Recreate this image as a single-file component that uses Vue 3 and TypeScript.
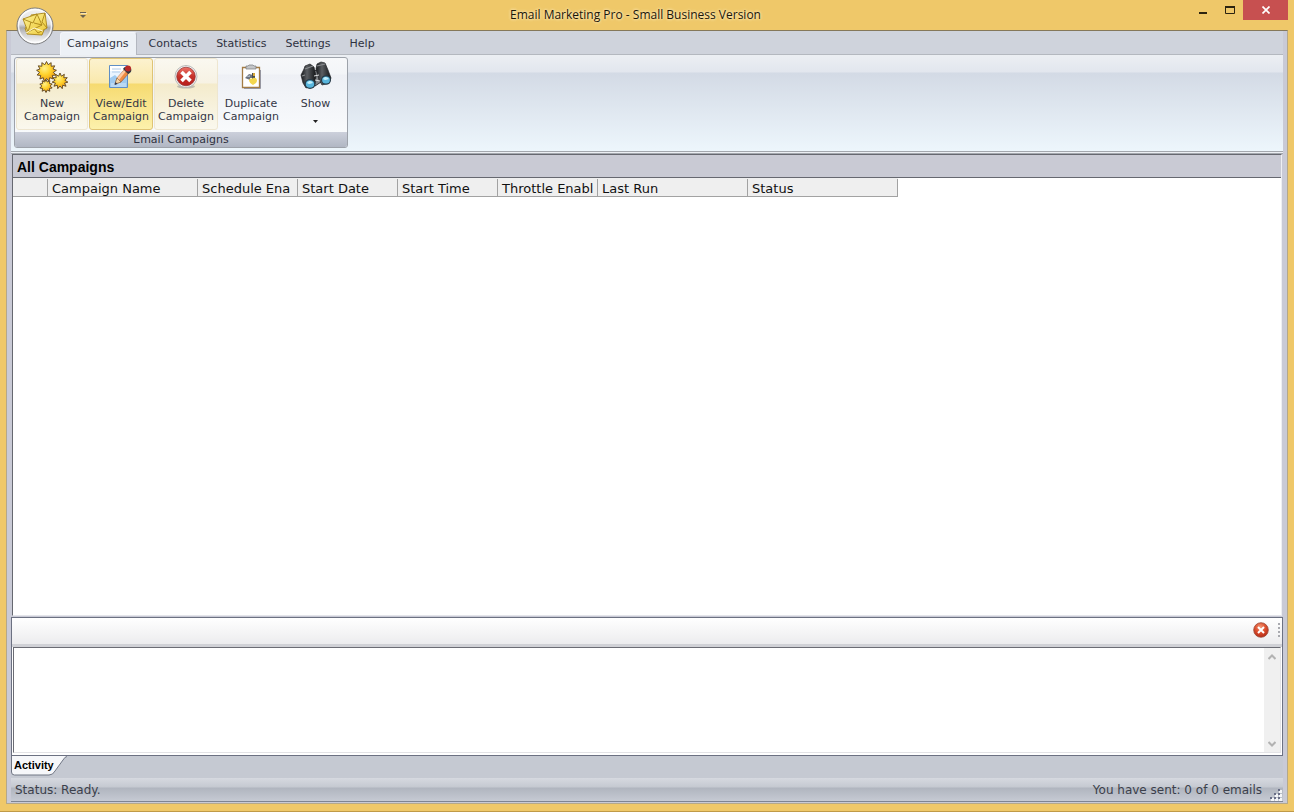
<script setup lang="ts">
import { ref } from 'vue'

interface RibbonCommand {
  icon: string
  lines: string[]
  tone: string
}

const menuTabs: string[] = ['Campaigns', 'Contacts', 'Statistics', 'Settings', 'Help']
const activeTab = ref('Campaigns')

const commands: RibbonCommand[] = [
  { icon: 'new', lines: ['New', 'Campaign'], tone: 'warm wide' },
  { icon: 'edit', lines: ['View/Edit', 'Campaign'], tone: 'hot' },
  { icon: 'delete', lines: ['Delete', 'Campaign'], tone: 'warm' },
  { icon: 'duplicate', lines: ['Duplicate', 'Campaign'], tone: '' },
  { icon: 'show', lines: ['Show'], tone: '' },
]

const columns: { label: string; size: string }[] = [
  { label: '', size: 'tiny' },
  { label: 'Campaign Name', size: 'large' },
  { label: 'Schedule Ena', size: 'medium' },
  { label: 'Start Date', size: 'medium' },
  { label: 'Start Time', size: 'medium' },
  { label: 'Throttle Enabl', size: 'medium' },
  { label: 'Last Run', size: 'large' },
  { label: 'Status', size: 'large' },
]

const log = ref('')

function burst(cx: number, cy: number, outer: number, inner: number, spikes: number): string {
  const points: string[] = []
  for (let i = 0; i < spikes * 2; i++) {
    const r = i % 2 === 0 ? outer : inner
    const a = (Math.PI * i) / spikes - Math.PI / 2
    points.push(`${(cx + r * Math.cos(a)).toFixed(2)},${(cy + r * Math.sin(a)).toFixed(2)}`)
  }
  return points.join(' ')
}

const bursts: string[] = [
  burst(10.5, 10.5, 10, 7, 13),
  burst(24, 20, 8, 5, 11),
  burst(10, 25, 6.5, 4.2, 10),
]
</script>

<template>
  <div class="window">
    <header class="titlebar">
      <div class="quick">
        <button class="quick-more" aria-label="Customize Quick Access Toolbar">
          <svg width="7" height="7" viewBox="0 0 7 7"><path d="M0 1.500h6" stroke="#6b6250" /><path d="M0 4h6L3 7z" fill="#6b6250" /><path d="M1 2.500h6" stroke="#f8e4b4" /></svg>
        </button>
      </div>
      <h1 class="title">Email Marketing Pro - Small Business Version</h1>
      <div class="caption-buttons">
        <button aria-label="Minimize">
          <svg width="10" height="10" viewBox="0 0 10 10"><path d="M1 7h8v2H1z" fill="#2c2410" /></svg>
        </button>
        <button aria-label="Maximize">
          <svg width="10" height="8" viewBox="0 0 10 8"><path d="M.5.5h9v7h-9z" fill="none" stroke="#2c2410" /><path d="M0 1h10" stroke="#2c2410" stroke-width="2" /></svg>
        </button>
        <button class="close" aria-label="Close">
          <svg width="8" height="8" viewBox="0 0 8 8"><path d="M.5.5l7 7M7.500.5l-7 7" stroke="#fff" stroke-width="1.700" /></svg>
        </button>
      </div>
    </header>

    <button class="orb" aria-label="Application menu">
      <svg width="38" height="38" viewBox="0 0 38 38">
        <defs>
          <linearGradient id="orbFill" x1="0" y1="0" x2="0" y2="1">
            <stop offset="0" stop-color="#f4f4f4" /><stop offset=".45" stop-color="#dcdcde" />
            <stop offset=".55" stop-color="#a9a9ac" /><stop offset=".75" stop-color="#d4d4d6" /><stop offset="1" stop-color="#fff" />
          </linearGradient>
          <linearGradient id="mailFill" x1="0" y1="0" x2="1" y2="1">
            <stop offset="0" stop-color="#fff59a" /><stop offset="1" stop-color="#ebc635" />
          </linearGradient>
        </defs>
        <circle cx="19" cy="19" r="18" fill="url(#orbFill)" stroke="#77787a" />
        <circle cx="19" cy="19" r="16.500" fill="none" stroke="#fff" stroke-width="1.500" opacity=".8" />
        <g stroke="#a98518" stroke-width=".9" fill="url(#mailFill)" stroke-linejoin="round">
          <path d="M9 21l8-2 11 4-2 5-15-1z" />
          <path d="M15 8l14-2 2 15-9 5-6-7z" />
          <path d="M29 6l-3 9 5 6" fill="none" />
          <path d="M7 12l14-5 5 11-14 7z" />
          <path d="M7 12l10 4 4-9M12 25l3-10M26 18l-8-2" fill="none" />
          <path d="M10 26l8-5 9 3" fill="none" stroke="#fffbe0" />
        </g>
      </svg>
    </button>

    <div class="client">
      <nav class="tabs">
        <button
          v-for="tab in menuTabs"
          :key="tab"
          :class="['tab', { active: tab === activeTab }]"
          @click="activeTab = tab"
        >{{ tab }}</button>
      </nav>

      <section class="ribbon">
        <div class="group">
          <div class="commands">
            <button v-for="cmd in commands" :key="cmd.icon" :class="['command', cmd.tone]">
              <svg v-if="cmd.icon === 'new'" class="icon" viewBox="0 0 32 32">
                <defs>
                  <radialGradient id="gold" cx=".4" cy=".35" r=".65">
                    <stop offset="0" stop-color="#fff08a" /><stop offset=".5" stop-color="#ffd22c" /><stop offset="1" stop-color="#ef9c13" />
                  </radialGradient>
                </defs>
                <polygon v-for="points in bursts" :key="points" :points="points" fill="url(#gold)" stroke="#5b4322" stroke-width=".9" />
              </svg>
              <svg v-else-if="cmd.icon === 'edit'" class="icon" viewBox="0 0 32 32">
                <path d="M4.500 4.500h18v22h-18z" fill="#eaf4ff" stroke="#5f8fc6" />
                <path d="M5 5h17v5H5z" fill="#fff" />
                <path d="M7 8h9M7 11h8" stroke="#b2cce8" />
                <path d="M5 17l5-3 4 4 8-3v11H5z" fill="#9fcaf0" />
                <path d="M6 23h15M6 25h15" stroke="#d5e8f8" />
                <path d="M10 23l2-6 8-9 4 4-8 9z" fill="#ef8b43" stroke="#8c4e28" stroke-width=".6" />
                <path d="M12 17l8-9 2 1-8 10z" fill="#ffc9a0" />
                <path d="M10 23l2-6 4 4z" fill="#f8d7a5" stroke="#7c5c3b" stroke-width=".5" />
                <path d="M18 8c2-3 5-3 8-1 1 3 0 5-3 6z" fill="#363a43" />
                <circle cx="23" cy="7.500" r="3" fill="#bb2928" />
                <path d="M9.500 24l1-3 2 2z" fill="#29334a" />
              </svg>
              <svg v-else-if="cmd.icon === 'delete'" class="icon" viewBox="0 0 32 32">
                <defs>
                  <linearGradient id="red" x1="0" y1="0" x2="0" y2="1">
                    <stop offset="0" stop-color="#ef7469" /><stop offset=".48" stop-color="#c7332b" /><stop offset="1" stop-color="#b71c1b" />
                  </linearGradient>
                </defs>
                <ellipse cx="16" cy="25.500" rx="9" ry="2" fill="#8f8f8f" opacity=".5" />
                <circle cx="16" cy="15.500" r="11" fill="#f3f3f3" stroke="#a9a9a9" stroke-width=".8" />
                <circle cx="16" cy="15.500" r="9.300" fill="url(#red)" stroke="#8d2825" stroke-width=".7" />
                <path d="M11.500 11l9 9M20.500 11l-9 9" stroke="#fff" stroke-width="3.600" />
              </svg>
              <svg v-else-if="cmd.icon === 'duplicate'" class="icon" viewBox="0 0 32 32">
                <path d="M7.500 6.500h17v20h-17z" fill="#fff" stroke="#a47c45" stroke-width="1.300" />
                <path d="M9 27.500h16.500V9" fill="none" stroke="#9696a0" />
                <path d="M11 5h2l1-1h4l1 1h2v3H11z" fill="#c3c5c8" stroke="#77797d" stroke-width=".7" />
                <path d="M10 17l4-4 4 1v3h-3v2z" fill="#6d7480" />
                <path d="M17 12h3v6h-3z" fill="#4a4e50" />
                <path d="M14 19c2-3 2 0 4-2 4-1 5 3 3 5l-3 2c-2-1-4-3-4-5z" fill="#f3d64e" />
                <path d="M18 12h2v3h-2z" fill="#d8a838" />
                <path d="M11 16l4-2v2z" fill="#a9b6c6" />
              </svg>
              <svg v-else class="icon" viewBox="0 0 32 32">
                <defs>
                  <linearGradient id="barrel" x1="0" y1="0" x2="1" y2="0">
                    <stop offset="0" stop-color="#17191c" /><stop offset=".4" stop-color="#5b5e62" /><stop offset="1" stop-color="#111315" />
                  </linearGradient>
                </defs>
                <path d="M10 10l10-1 4 10-9 6z" fill="#85888c" stroke="#313337" />
                <path d="M1 14L4 8l1-3 5-2 4 3 2 9-1 8-9 4-3-5z" fill="url(#barrel)" stroke="#222427" stroke-width=".7" />
                <path d="M16 8l1-5 4-2 4 1 3 7 3 8-2 5-7 2-3-5z" fill="url(#barrel)" stroke="#222427" stroke-width=".7" />
                <path d="M5 8l8-3M17 5l8-2M2 15l3-1" stroke="#8a8d90" stroke-width="1.200" />
                <path d="M14 15l5-1M15 19l5 1" stroke="#dddfe0" />
                <ellipse cx="10" cy="23" rx="5.500" ry="5" fill="#253a48" />
                <ellipse cx="10" cy="23" rx="4.200" ry="3.800" fill="#58b5dc" />
                <path d="M7 22c2-3 5-2 6 0-2 0-3 2-6 0z" fill="#c1effd" />
                <ellipse cx="26" cy="19" rx="5" ry="4.800" fill="#253a48" />
                <ellipse cx="26" cy="19" rx="3.900" ry="3.600" fill="#58b5dc" />
                <path d="M23 18c2-3 4-2 6 0-2 0-3 2-6 0z" fill="#c1effd" />
              </svg>
              <span v-for="line in cmd.lines" :key="line" class="caption">{{ line }}</span>
              <svg v-if="cmd.icon === 'show'" class="drop" width="5" height="3" viewBox="0 0 5 3"><path d="M0 0h5L2.500 3z" fill="#222" /></svg>
            </button>
          </div>
          <div class="group-label">Email Campaigns</div>
        </div>
      </section>

      <main class="workspace">
        <h2 class="section-title">All Campaigns</h2>
        <div class="list">
          <table class="grid">
            <thead>
              <tr>
                <th v-for="(col, i) in columns" :key="i" :class="col.size" scope="col"><div class="clip">{{ col.label }}</div></th>
              </tr>
            </thead>
          </table>
        </div>
      </main>

      <section class="activity">
        <div class="activity-bar">
          <button class="clear" aria-label="Close activity">
            <svg width="16" height="16" viewBox="0 0 16 16">
              <defs>
                <radialGradient id="clearFill" cx=".45" cy=".3" r=".7">
                  <stop offset="0" stop-color="#f39a79" /><stop offset=".5" stop-color="#de5130" /><stop offset="1" stop-color="#b52a16" />
                </radialGradient>
              </defs>
              <circle cx="8" cy="8" r="7.300" fill="url(#clearFill)" stroke="#9b4a38" stroke-width=".8" />
              <path d="M5 5l6 6M11 5l-6 6" stroke="#fff" stroke-width="2" />
            </svg>
          </button>
          <span class="gripper"></span>
        </div>
        <div class="log-frame">
          <textarea v-model="log" class="log" aria-label="Activity log" readonly></textarea>
          <div class="scrollbar">
            <button aria-label="Scroll up"><svg width="8" height="6" viewBox="0 0 8 6"><path d="M.5 5L4 1.500 7.500 5" fill="none" stroke="#b2b2b2" stroke-width="2" /></svg></button>
            <button aria-label="Scroll down"><svg width="8" height="6" viewBox="0 0 8 6"><path d="M.5 1L4 4.500 7.500 1" fill="none" stroke="#b2b2b2" stroke-width="2" /></svg></button>
          </div>
        </div>
      </section>

      <div class="dock-tabs">
        <button class="dock-tab">
          <svg class="dock-shape" width="57" height="21" viewBox="0 0 57 21">
            <path d="M.5 0v16q0 3 3 3H38q4 0 6-4L52 4q2-3.500 4-3.500V0z" fill="#f6f7fa" />
            <path d="M.5 0v16q0 3 3 3H38q4 0 6-4L52 4q2-3.500 4-3.500" fill="none" stroke="#707684" />
          </svg>
          <span class="dock-text">Activity</span>
        </button>
      </div>

      <footer class="status">
        <span>Status: Ready.</span>
        <span class="sent">You have sent: 0 of 0 emails</span>
        <svg class="resize" width="12" height="12" viewBox="0 0 12 12">
          <path d="M9 1h3v3H9zM5 5h3v3H5zM9 5h3v3H9zM1 9h3v3H1zM5 9h3v3H5zM9 9h3v3H9z" fill="#f4f5f8" />
          <path d="M8 0h2v2H8zM4 4h2v2H4zM8 4h2v2H8zM0 8h2v2H0zM4 8h2v2H4zM8 8h2v2H8z" fill="#686d86" />
        </svg>
      </footer>
    </div>
  </div>
</template>

<style>
body {
  margin: 0;
}
</style>

<style scoped>
.window {
  position: relative;
  box-sizing: border-box;
  display: flex;
  flex-direction: column;
  height: 100vh;
  padding: 0 6px 7px;
  background: #efc869;
  border-bottom: 1px solid #c09a48;
  font-family: "DejaVu Sans", Verdana, sans-serif;
  font-size: 11px;
  color: #2e3140;
}
button {
  margin: 0;
  padding: 0;
  border: 0;
  background: none;
  font: inherit;
  color: inherit;
}
svg {
  display: block;
}
.titlebar {
  display: flex;
  flex: none;
  height: 30px;
}
.quick {
  width: 76px;
}
.quick-more {
  display: block;
  margin: 11px 0 0 74px;
}
.title {
  flex: 1;
  margin: 0;
  line-height: 30px;
  text-align: center;
  font-family: "Open Sans", "Noto Sans", sans-serif;
  font-size: 12px;
  font-weight: 400;
  color: #1c1608;
  text-shadow: 0 0 3px #fbe9bd, 0 0 3px #fbe9bd;
}
.caption-buttons {
  display: flex;
  height: 20px;
}
.caption-buttons button {
  display: flex;
  align-items: center;
  justify-content: center;
  width: 27px;
}
.caption-buttons .close {
  width: 45px;
  background: #c75050;
}
.orb {
  position: absolute;
  top: 7px;
  left: 16px;
}
.client {
  flex: 1;
  min-height: 0;
  display: flex;
  flex-direction: column;
  padding: 0 4px 1px;
  background: #c9cad6;
  border: 1px solid #b4a88a;
  border-top-color: #85785a;
}
.tabs {
  display: flex;
  flex: none;
  height: 22px;
  padding: 1px 0 0 49px;
  background: #cfd3dc;
  border-bottom: 1px solid #b4b8bf;
}
.tab {
  height: 23px;
  margin-right: 3px;
  padding: 0 7px 1px;
  border: 1px solid transparent;
  border-bottom: 0;
}
.tab.active {
  margin-right: 4px;
  padding: 0 7px 1px 6px;
  border-color: #f4f6fa #b3b7c0 transparent #f4f6fa;
  border-radius: 3px 3px 0 0;
  background: #edf1f6;
}
.ribbon {
  display: flex;
  flex: none;
  padding: 2px 3px 3px;
  border-bottom: 3px double #a4a8ae;
  background: linear-gradient(#eceff3, #e2e6ee 17px, #d3dae5 18px, #edf6fc);
}
.group {
  border: 1px solid #9da2aa;
  border-radius: 3px;
  background: linear-gradient(#f7f8fa, #f3f5f8 16px, #eef0f5 17px, #f8fafc 74px);
  overflow: hidden;
}
.commands {
  display: flex;
  gap: 1px;
  padding: 0 0 2px 1px;
}
.command {
  box-sizing: border-box;
  display: flex;
  flex-direction: column;
  align-items: center;
  width: 64px;
  height: 72px;
  padding-top: 2px;
  border: 1px solid transparent;
  border-radius: 3px;
  color: #343746;
}
.command.wide {
  width: 72px;
}
.command:last-child {
  width: 63px;
}
.command.warm {
  border-color: #eee6d0;
  background: linear-gradient(#faf8f0, #f7f2e3 24px, #f4ebcb 25px, #faf8ee);
}
.command.hot {
  border-color: #dfc474;
  background: linear-gradient(#fcf2cf, #fae9ac 24px, #f6da70 25px, #fcf1ac);
}
.icon {
  width: 32px;
  height: 32px;
  margin-bottom: 4px;
}
.caption {
  line-height: 13px;
}
.drop {
  margin-top: 10px;
}
.group-label {
  height: 15px;
  line-height: 16px;
  text-align: center;
  background: linear-gradient(#ccd0db, #b1b7c4);
}
.workspace {
  flex: 1;
  min-height: 0;
  display: flex;
  flex-direction: column;
  border: 1px solid #666870;
  border-right-color: #eeeff3;
  border-bottom-color: #e4e5ea;
  margin: 0 1px 1px;
}
.section-title {
  flex: none;
  margin: 0;
  padding-left: 4px;
  height: 22px;
  line-height: 24px;
  border-bottom: 1px solid #666870;
  background: #c9cad4;
  font-family: "Liberation Sans", Arial, sans-serif;
  font-size: 14px;
  font-weight: 700;
  color: #000;
}
.list {
  flex: 1;
  background: #fff;
}
.grid {
  width: 885px;
  table-layout: fixed;
  border-collapse: collapse;
  background: #efefef;
}
.grid th {
  height: 18px;
  padding: 0;
  border-bottom: 1px solid #a2a2a2;
  font-size: 13px;
  font-weight: 400;
  text-align: left;
  color: #111;
}
.grid .tiny {
  width: 35px;
}
.grid .large {
  width: 150px;
}
.grid .medium {
  width: 100px;
}
.clip {
  height: 17px;
  padding-left: 4px;
  line-height: 20px;
  border-right: 1px solid #a2a2a2;
  white-space: nowrap;
}
.activity {
  flex: none;
  display: flex;
  flex-direction: column;
  height: 137px;
  border: 1px solid #6c7182;
}
.activity-bar {
  box-sizing: border-box;
  display: flex;
  align-items: center;
  justify-content: flex-end;
  gap: 9px;
  height: 29px;
  padding: 0 2px 3px 0;
  border-bottom: 3px solid #d0d1d6;
  background: linear-gradient(#fff, #ececee);
}
.gripper {
  width: 2px;
  height: 14px;
  background: repeating-linear-gradient(#a9aab0 0 2px, transparent 2px 4px);
}
.log-frame {
  flex: 1;
  display: flex;
  margin: 0 1px 2px;
  border: 1px solid #6b6c74;
  border-right-color: #e3e3e6;
  border-bottom-color: #e3e3e6;
}
.log {
  flex: 1;
  border: 0;
  padding: 2px;
  resize: none;
  outline: none;
  background: #fff;
}
.scrollbar {
  display: flex;
  flex-direction: column;
  justify-content: space-between;
  width: 16px;
  background: #f0f0f0;
}
.scrollbar button {
  display: flex;
  align-items: center;
  justify-content: center;
  height: 17px;
}
.activity {
  background: #fff;
}
.dock-tabs {
  flex: none;
  height: 22px;
  background: #c5c9d2;
}
.dock-tab {
  display: grid;
  width: 57px;
  height: 21px;
}
.dock-shape,
.dock-text {
  grid-area: 1 / 1;
}
.dock-text {
  padding-left: 3px;
  line-height: 18px;
  text-align: left;
  font-family: "Liberation Sans", Arial, sans-serif;
  font-weight: 700;
  font-size: 11px;
  color: #000;
}
.status {
  flex: none;
  display: flex;
  height: 23px;
  padding: 0 1px 0 4px;
  line-height: 24px;
  border-bottom: 1px solid #7e8492;
  background: linear-gradient(#d6d9e0, #c5c9d1 9px, #b0b5bf 10px, #c6cad3);
  font-size: 12px;
  color: #3b3f4b;
}
.sent {
  margin-left: auto;
}
.resize {
  align-self: flex-end;
  margin-left: 8px;
}
</style>
